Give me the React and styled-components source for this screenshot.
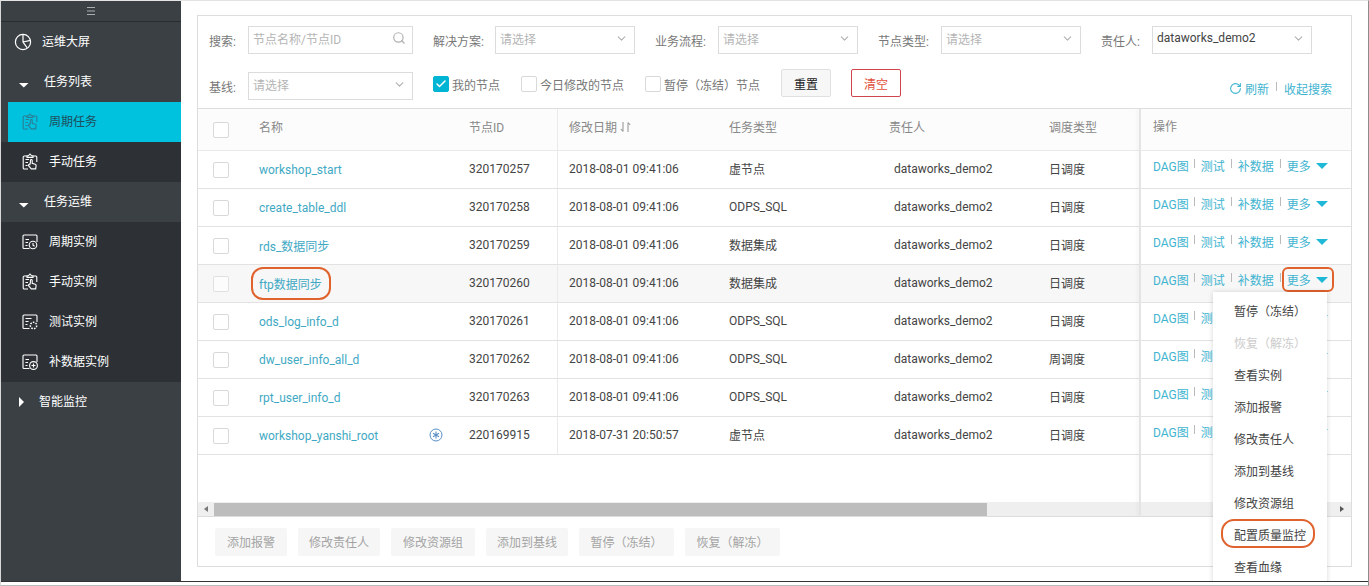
import React from 'react';
import styled, { createGlobalStyle } from 'styled-components';
import { ChevronDown, Search, RotateCw, Check } from 'lucide-react';

const GlobalStyle = createGlobalStyle`
  html, body {
    margin: 0;
    padding: 0;
    background: #fff;
    overflow: hidden;
  }
  * {
    box-sizing: border-box;
  }
`;

const Page = styled.div`
  width: 1369px;
  height: 586px;
  overflow: hidden;
  font-family: Roboto, "Noto Sans CJK SC", sans-serif;
  font-size: 12px;
  color: #333;
  border-top: 1px solid #e4e4e4;
  border-left: 1px solid #d8d8d8;
  border-right: 1px solid #8c8c8c;
  border-bottom: 1px solid #bbb;
`;

const Frame = styled.div`
  display: flex;
  height: 581px;
  border-bottom: 1px solid #333;
  overflow: hidden;
`;

const Sidebar = styled.aside`
  width: 180px;
  flex-shrink: 0;
  background: #3b4045;
  color: #fff;
`;

const Toggle = styled.div`
  height: 21px;
  display: flex;
  align-items: center;
  justify-content: center;
  border-bottom: 1px solid #2a2d30;
`;

const SideItem = styled.div`
  height: 40px;
  display: flex;
  align-items: center;
  padding-left: ${(p) => p.$indent || 0}px;
  background: ${(p) => (p.$active ? '#00c1de' : p.$dark ? '#2d3135' : 'transparent')};
  margin-left: ${(p) => (p.$active ? 7 : 0)}px;
  color: ${(p) => (p.$active ? '#1f4e5c' : '#fff')};
`;

const SideText = styled.span`
  margin-bottom: 4px;
`;

const DarkWrap = styled.div`
  background: #2d3135;
`;

const IconSlot = styled.span`
  width: ${(p) => p.$w}px;
  flex-shrink: 0;
  display: flex;
  align-items: center;
  margin-top: ${(p) => p.$down || 0}px;
`;

const Content = styled.main`
  flex: 1;
  min-width: 0;
  padding: 14px 15px 0 16px;
  background: #fff;
`;

const Panel = styled.div`
  position: relative;
  width: 1155px;
  height: 552px;
  border: 1px solid #ddd;
  display: flex;
  flex-direction: column;
`;

const Filters = styled.div`
  height: 93px;
  padding: 10px 11px 0 11px;
  border-bottom: 1px solid #ddd;
`;

const FilterRow = styled.div`
  display: flex;
  align-items: center;
  height: 28px;
  margin-bottom: 18px;
  color: #666;
`;

const FieldLabel = styled.label`
  width: ${(p) => p.$w}px;
  flex-shrink: 0;
  color: #777;
  white-space: nowrap;
`;

const Select = styled.div`
  width: ${(p) => p.$w}px;
  height: 28px;
  flex-shrink: 0;
  margin-right: ${(p) => p.$gap || 0}px;
  border: 1px solid #dcdcdc;
  padding: 0 4px 4px;
  display: flex;
  align-items: center;
  justify-content: space-between;
  color: ${(p) => (p.$filled ? '#444' : '#b5b5b5')};
  svg {
    color: #b0b0b0;
    margin-right: 2px;
  }
`;

const CheckBox = styled.span`
  width: 16px;
  height: 16px;
  flex-shrink: 0;
  border-radius: 2px;
  border: 1px solid ${(p) => (p.$on ? '#00b4d4' : '#d9d9d9')};
  background: ${(p) => (p.$on ? '#00b4d4' : '#fff')};
  display: inline-flex;
  align-items: center;
  justify-content: center;
  color: #fff;
  opacity: ${(p) => (p.$muted ? 0.7 : 1)};
`;

const CheckLabel = styled.span`
  display: flex;
  align-items: center;
  gap: 3px;
  width: ${(p) => p.$w}px;
  flex-shrink: 0;
  margin-bottom: 4px;
  color: #777;
`;

const Btn = styled.button`
  height: 28px;
  width: 50px;
  font: inherit;
  padding: 0;
  border-radius: 2px;
  margin-right: ${(p) => p.$gap || 0}px;
  margin-bottom: 6px;
  border: 1px solid ${(p) => (p.$danger ? '#d0454c' : '#e0e0e0')};
  background: ${(p) => (p.$danger ? '#fff' : '#f7f7f7')};
  color: ${(p) => (p.$danger ? '#e0503c' : '#222')};
`;

const RightLinks = styled.div`
  margin-left: auto;
  margin-right: 8px;
  padding-top: 4px;
  display: flex;
  align-items: center;
  color: #3fb4d0;
  svg {
    margin-right: 3px;
  }
`;

const LinkSep = styled.span`
  width: 1px;
  height: 9px;
  background: #bbb;
  margin: 0 6px 4px;
`;

const RefreshSep = styled(LinkSep)`
  margin: 0 7px 4px;
`;

const TableWrap = styled.div`
  position: relative;
  height: 408px;
  overflow: hidden;
  display: flex;
  flex-direction: column;
`;

const Rows = styled.div`
  flex: 1;
`;

const Row = styled.div`
  display: grid;
  grid-template-columns: 61px 210px 88px 172px 160px 160px 91px 1fr;
  align-items: center;
  height: 38px;
  border-bottom: 1px solid #e2e2e2;
  background: ${(p) => (p.$hover ? '#f7f7f7' : '#fff')};
`;

const HeadRow = styled(Row)`
  height: 42px;
  background: #fcfcfc;
  border-bottom-color: #eaeaea;
`;

const Cell = styled.div`
  height: 100%;
  display: flex;
  align-items: center;
  white-space: nowrap;
  color: #444;
  padding-left: ${(p) => p.$pad || 0}px;
  padding-bottom: 2px;
  position: relative;
  ${(p) => p.$line && 'border-left: 1px solid #eaeaea;'}
`;

const HeadCell = styled(Cell)`
  color: #888;
  padding-bottom: 6px;
`;

const CheckCell = styled(Cell)`
  padding-left: 15px;
  padding-bottom: 0;
`;

const OpsCell = styled(Cell)`
  padding-left: 13px;
  padding-bottom: 9px;
  color: #3fb4d0;
`;

const HeadOps = styled(OpsCell)`
  color: #888;
`;

const NameLink = styled.span`
  color: #3fa9c4;
  margin-top: 2px;
`;

const NameRing = styled.span`
  position: absolute;
  left: -8px;
  top: 2px;
  width: 80px;
  height: 33px;
  border: 2px solid #e0622d;
  border-radius: 12px;
`;

const RootBadge = styled.span`
  position: absolute;
  right: 26px;
  top: 11px;
  display: flex;
`;

const OpLink = styled.span`
  color: #3fb4d0;
  margin-right: ${(p) => (p.$tight ? -1 : 0)}px;
`;

const MoreLink = styled.span`
  position: relative;
  display: inline-flex;
  align-items: center;
  gap: 5px;
  color: #3fb4d0;
`;

const MoreRing = styled.span`
  position: absolute;
  left: -5px;
  right: -6px;
  top: -4px;
  bottom: -4px;
  border: 2px solid #e0622d;
  border-radius: 6px;
`;

const Caret = styled.span`
  width: 0;
  height: 0;
  border-left: 6px solid transparent;
  border-right: 6px solid transparent;
  border-top: 6px solid #1fb8d6;
  margin-top: 1px;
`;

const ScrollBar = styled.div`
  height: 15px;
  margin-top: auto;
  background: #efefef;
  display: flex;
  align-items: center;
  border-bottom: 1px solid #ddd;
  position: relative;
`;

const ScrollArrow = styled.span`
  width: 0;
  height: 0;
  border-top: 3px solid transparent;
  border-bottom: 3px solid transparent;
  ${(p) =>
    p.$right
      ? 'border-left: 4px solid #555; position: absolute; right: 7px;'
      : 'border-right: 4px solid #777; margin-left: 6px;'}
`;

const ScrollThumb = styled.span`
  width: 773px;
  height: 13px;
  background: #bdbdbd;
  margin-left: 6px;
`;

const FixedShade = styled.span`
  position: absolute;
  left: 941px;
  top: 0;
  bottom: 0;
  width: 2px;
  background: #e4e4e4;
  box-shadow: -2px 0 3px rgba(0, 0, 0, 0.04);
`;

const Actions = styled.div`
  flex: 1;
  display: flex;
  align-items: center;
  gap: 11px;
  padding-left: 17px;
`;

const ActionBtn = styled.span`
  width: ${(p) => p.$w}px;
  height: 28px;
  display: flex;
  align-items: center;
  justify-content: center;
  border-radius: 2px;
  background: #f6f6f6;
  color: #a4a4a4;
  white-space: nowrap;
`;

const Menu = styled.div`
  position: absolute;
  left: 1015px;
  top: 276px;
  width: 114px;
  padding-top: 2px;
  height: 300px;
  background: #fff;
  box-shadow: 0 0 5px rgba(0, 0, 0, 0.16);
`;

const MenuItem = styled.div`
  position: relative;
  height: 32px;
  padding-left: 21px;
  display: flex;
  align-items: center;
  white-space: nowrap;
  color: ${(p) => (p.$disabled ? '#ccc' : '#444')};
`;

const MenuRing = styled.span`
  position: absolute;
  left: 8px;
  top: 1px;
  width: 94px;
  height: 29px;
  border: 2px solid #e0622d;
  border-radius: 13px;
`;

const MenuLines = () => (
  <svg width="12" height="10" viewBox="0 0 12 10" fill="none" stroke="#a9adb0">
    <path d="M2 1.5h8M2 5h8M2 8.5h8" />
  </svg>
);

const ClockIcon = () => (
  <svg width="20" height="20" viewBox="0 0 20 20" fill="none" stroke="#fff" strokeWidth="1.2">
    <circle cx="10" cy="10" r="7.6" />
    <path d="M10 2.4V10l4 5.6M10 10l7.4-1.6" />
  </svg>
);

const TaskIcon = ({ color = '#fff', kind = 'cycle' }) => (
  <svg width="18" height="18" viewBox="0 0 18 18" fill="none" stroke={color} strokeWidth="1.1">
    {kind === 'hand' ? (
      <path d="M7 16H3.2a1 1 0 0 1-1-1V4a1 1 0 0 1 1-1h2.6M12 3h2.8a1 1 0 0 1 1 1v5M6 4.4V2.8h1.4L9 1l1.6 1.8H12v1.6z" />
    ) : (
      <path d="M8.5 15.5H3a1 1 0 0 1-1-1V3a1 1 0 0 1 1-1h12a1 1 0 0 1 1 1v6" />
    )}
    {kind === 'test' ? (
      <path d="M4.5 5.5h6M4.5 8.5h3M4.5 11.5h2" />
    ) : (
      <path d="M4.5 6.5h3.5M4.5 9.5h2.5M4.5 12.5h2" />
    )}
    {kind === 'test' && (
      <g strokeDasharray="1.6 1.2" strokeWidth="1.5">
        <circle cx="12.5" cy="12.5" r="3.2" />
      </g>
    )}
    {kind === 'add' && (
      <>
        <circle cx="12.5" cy="12.5" r="3.9" />
        <path d="M12.5 10.5v4M10.5 12.5h4" />
      </>
    )}
    {kind === 'cycle' && (
      <>
        <circle cx="12" cy="12" r="3.8" />
        <path d="M12 10v2.2l1.6 1" />
      </>
    )}
    {kind === 'hand' && (
      <path d="M9.4 9.6V7.4a.9.9 0 0 1 1.8 0v3l3 .8a1.2 1.2 0 0 1 .9 1.3l-.4 3.4h-4.4l-2.8-3.2a.9.9 0 0 1 1.3-1.2z" />
    )}
  </svg>
);

const SideArrow = ({ open }) => (
  <svg width="10" height="10" viewBox="0 0 10 10" fill="#fff">
    {open ? <path d="M0 3h9.5L4.8 7.5z" /> : <path d="M2 0l5 5-5 5z" />}
  </svg>
);

const SortIcon = () => (
  <svg width="11" height="12" viewBox="0 0 11 12" fill="none" stroke="#999" strokeWidth="1.1">
    <path d="M3 1v9.5M3 10.5L.8 8M8 11V1.5M8 1.5L10.2 4" />
  </svg>
);

const StarBadge = () => (
  <svg width="14" height="14" viewBox="0 0 14 14" fill="none" stroke="#5b8fc4">
    <circle cx="7" cy="7" r="6" />
    <path d="M7 3.5v7M4 5.2l6 3.6M10 5.2L4 8.8" strokeWidth="1.1" />
  </svg>
);

const tasks = [
  { name: 'workshop_start', id: '320170257', date: '2018-08-01 09:41:06', type: '虚节点', sched: '日调度' },
  { name: 'create_table_ddl', id: '320170258', date: '2018-08-01 09:41:06', type: 'ODPS_SQL', sched: '日调度' },
  { name: 'rds_数据同步', id: '320170259', date: '2018-08-01 09:41:06', type: '数据集成', sched: '日调度' },
  { name: 'ftp数据同步', id: '320170260', date: '2018-08-01 09:41:06', type: '数据集成', sched: '日调度', hover: true },
  { name: 'ods_log_info_d', id: '320170261', date: '2018-08-01 09:41:06', type: 'ODPS_SQL', sched: '日调度' },
  { name: 'dw_user_info_all_d', id: '320170262', date: '2018-08-01 09:41:06', type: 'ODPS_SQL', sched: '周调度' },
  { name: 'rpt_user_info_d', id: '320170263', date: '2018-08-01 09:41:06', type: 'ODPS_SQL', sched: '日调度' },
  { name: 'workshop_yanshi_root', id: '220169915', date: '2018-07-31 20:50:57', type: '虚节点', sched: '日调度', root: true },
];

const menuItems = ['暂停（冻结）', '恢复（解冻）', '查看实例', '添加报警', '修改责任人', '添加到基线', '修改资源组', '配置质量监控', '查看血缘'];
const bulkActions = [
  { label: '添加报警', width: 72 },
  { label: '修改责任人', width: 82 },
  { label: '修改资源组', width: 84 },
  { label: '添加到基线', width: 82 },
  { label: '暂停（冻结）', width: 95 },
  { label: '恢复（解冻）', width: 95 },
];

const App = () => (
  <Page>
    <GlobalStyle />
    <Frame>
      <Sidebar>
        <Toggle>
          <MenuLines />
        </Toggle>
        <SideItem $indent={12}>
          <IconSlot $w={29}><ClockIcon /></IconSlot>
          <SideText>运维大屏</SideText>
        </SideItem>
        <SideItem $indent={18}>
          <IconSlot $w={25} $down={6}><SideArrow open /></IconSlot>
          <SideText>任务列表</SideText>
        </SideItem>
        <SideItem $active $indent={13}>
          <IconSlot $w={28}><TaskIcon kind="hand" color="#2a7f96" /></IconSlot>
          <SideText>周期任务</SideText>
        </SideItem>
        <SideItem $dark $indent={20}>
          <IconSlot $w={28}><TaskIcon kind="hand" /></IconSlot>
          <SideText>手动任务</SideText>
        </SideItem>
        <SideItem $indent={18}>
          <IconSlot $w={25} $down={6}><SideArrow open /></IconSlot>
          <SideText>任务运维</SideText>
        </SideItem>
        <DarkWrap>
          <SideItem $indent={20}>
            <IconSlot $w={28}><TaskIcon /></IconSlot>
            <SideText>周期实例</SideText>
          </SideItem>
          <SideItem $indent={20}>
            <IconSlot $w={28}><TaskIcon kind="hand" /></IconSlot>
            <SideText>手动实例</SideText>
          </SideItem>
          <SideItem $indent={20}>
            <IconSlot $w={28}><TaskIcon kind="test" /></IconSlot>
            <SideText>测试实例</SideText>
          </SideItem>
          <SideItem $indent={20}>
            <IconSlot $w={28}><TaskIcon kind="add" /></IconSlot>
            <SideText>补数据实例</SideText>
          </SideItem>
        </DarkWrap>
        <SideItem $indent={16}>
          <IconSlot $w={22}><SideArrow /></IconSlot>
          <SideText>智能监控</SideText>
        </SideItem>
      </Sidebar>

      <Content>
        <Panel>
          <Filters>
            <FilterRow>
              <FieldLabel $w={39}>搜索:</FieldLabel>
              <Select $w={165} $gap={20}>
                节点名称/节点ID
                <Search size={14} />
              </Select>
              <FieldLabel $w={62}>解决方案:</FieldLabel>
              <Select $w={140} $gap={20}>
                请选择
                <ChevronDown size={13} />
              </Select>
              <FieldLabel $w={63}>业务流程:</FieldLabel>
              <Select $w={140} $gap={20}>
                请选择
                <ChevronDown size={13} />
              </Select>
              <FieldLabel $w={63}>节点类型:</FieldLabel>
              <Select $w={140} $gap={20}>
                请选择
                <ChevronDown size={13} />
              </Select>
              <FieldLabel $w={51}>责任人:</FieldLabel>
              <Select $w={160} $filled>
                dataworks_demo2
                <ChevronDown size={13} />
              </Select>
            </FilterRow>
            <FilterRow>
              <FieldLabel $w={39}>基线:</FieldLabel>
              <Select $w={165} $gap={20}>
                请选择
                <ChevronDown size={13} />
              </Select>
              <CheckLabel $w={88}>
                <CheckBox $on><Check size={12} strokeWidth={3} /></CheckBox>
                我的节点
              </CheckLabel>
              <CheckLabel $w={124}>
                <CheckBox />
                今日修改的节点
              </CheckLabel>
              <CheckLabel $w={136}>
                <CheckBox />
                暂停（冻结）节点
              </CheckLabel>
              <Btn $gap={20}>重置</Btn>
              <Btn $danger>清空</Btn>
              <RightLinks>
                <RotateCw size={13} />
                刷新
                <RefreshSep />
                收起搜索
              </RightLinks>
            </FilterRow>
          </Filters>

          <TableWrap>
            <Rows>
              <HeadRow>
                <CheckCell><CheckBox /></CheckCell>
                <HeadCell>名称</HeadCell>
                <HeadCell>节点ID</HeadCell>
                <HeadCell $line $pad={11}>修改日期&nbsp;<SortIcon /></HeadCell>
                <HeadCell>任务类型</HeadCell>
                <HeadCell>责任人</HeadCell>
                <HeadCell>调度类型</HeadCell>
                <HeadOps>操作</HeadOps>
              </HeadRow>
              {tasks.map((t) => (
                <Row key={t.id} $hover={t.hover}>
                  <CheckCell><CheckBox $muted={t.hover} /></CheckCell>
                  <Cell>
                    <NameLink>{t.name}</NameLink>
                    {t.hover && <NameRing />}
                    {t.root && <RootBadge><StarBadge /></RootBadge>}
                  </Cell>
                  <Cell>{t.id}</Cell>
                  <Cell $line $pad={11}>{t.date}</Cell>
                  <Cell>{t.type}</Cell>
                  <Cell $pad={5}>dataworks_demo2</Cell>
                  <Cell>{t.sched}</Cell>
                  <OpsCell>
                    <OpLink $tight>DAG图</OpLink>
                    <LinkSep />
                    <OpLink>测试</OpLink>
                    <LinkSep />
                    <OpLink>补数据</OpLink>
                    <LinkSep />
                    <MoreLink>
                      更多<Caret />
                      {t.hover && <MoreRing />}
                    </MoreLink>
                  </OpsCell>
                </Row>
              ))}
            </Rows>
            <ScrollBar>
              <ScrollArrow />
              <ScrollThumb />
              <ScrollArrow $right />
            </ScrollBar>
            <FixedShade />
          </TableWrap>

          <Actions>
            {bulkActions.map((a) => (
              <ActionBtn key={a.label} $w={a.width}>{a.label}</ActionBtn>
            ))}
          </Actions>

          <Menu>
            {menuItems.map((m) => (
              <MenuItem key={m} $disabled={m === '恢复（解冻）'}>
                {m}
                {m === '配置质量监控' && <MenuRing />}
              </MenuItem>
            ))}
          </Menu>
        </Panel>
      </Content>
    </Frame>
  </Page>
);

export default App;
